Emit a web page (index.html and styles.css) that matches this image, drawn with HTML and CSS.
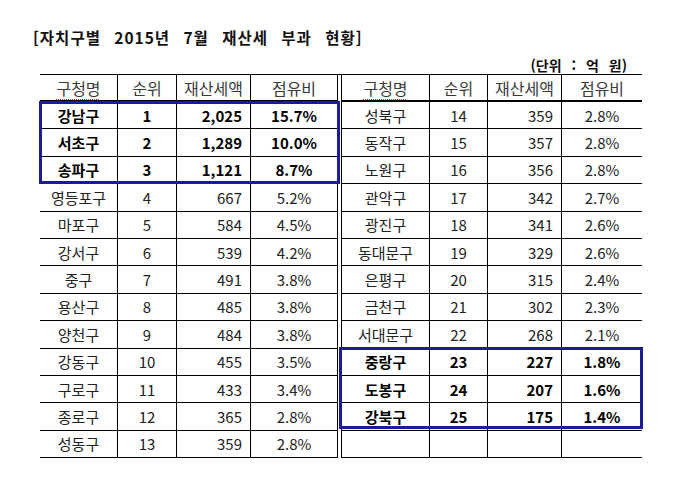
FILE: index.html
```html
<!DOCTYPE html>
<html lang="ko">
<head>
<meta charset="utf-8">
<link rel="stylesheet" href="styles.css">
</head>
<body>
<div class="title">[자치구별 2015년 7월 재산세 부과 현황]</div>
<div class="unit">(단위 : 억 원)</div>
<div class="grid">
  <div class="c h"><span class="spell">구청명</span></div><div class="c h">순위</div><div class="c h">재산세액</div><div class="c h">점유비</div><div class="sp"></div><div class="c h"><span class="spell">구청명</span></div><div class="c h">순위</div><div class="c h">재산세액</div><div class="c h">점유비</div>

  <div class="c b">강남구</div><div class="c b">1</div><div class="c b r">2,025</div><div class="c b">15.7%</div><div class="sp"></div><div class="c">성북구</div><div class="c">14</div><div class="c r">359</div><div class="c">2.8%</div>
  <div class="c b">서초구</div><div class="c b">2</div><div class="c b r">1,289</div><div class="c b">10.0%</div><div class="sp"></div><div class="c">동작구</div><div class="c">15</div><div class="c r">357</div><div class="c">2.8%</div>
  <div class="c b">송파구</div><div class="c b">3</div><div class="c b r">1,121</div><div class="c b">8.7%</div><div class="sp"></div><div class="c">노원구</div><div class="c">16</div><div class="c r">356</div><div class="c">2.8%</div>
  <div class="c">영등포구</div><div class="c">4</div><div class="c r">667</div><div class="c">5.2%</div><div class="sp"></div><div class="c">관악구</div><div class="c">17</div><div class="c r">342</div><div class="c">2.7%</div>
  <div class="c">마포구</div><div class="c">5</div><div class="c r">584</div><div class="c">4.5%</div><div class="sp"></div><div class="c">광진구</div><div class="c">18</div><div class="c r">341</div><div class="c">2.6%</div>
  <div class="c">강서구</div><div class="c">6</div><div class="c r">539</div><div class="c">4.2%</div><div class="sp"></div><div class="c">동대문구</div><div class="c">19</div><div class="c r">329</div><div class="c">2.6%</div>
  <div class="c">중구</div><div class="c">7</div><div class="c r">491</div><div class="c">3.8%</div><div class="sp"></div><div class="c">은평구</div><div class="c">20</div><div class="c r">315</div><div class="c">2.4%</div>
  <div class="c">용산구</div><div class="c">8</div><div class="c r">485</div><div class="c">3.8%</div><div class="sp"></div><div class="c">금천구</div><div class="c">21</div><div class="c r">302</div><div class="c">2.3%</div>
  <div class="c">양천구</div><div class="c">9</div><div class="c r">484</div><div class="c">3.8%</div><div class="sp"></div><div class="c">서대문구</div><div class="c">22</div><div class="c r">268</div><div class="c">2.1%</div>
  <div class="c">강동구</div><div class="c">10</div><div class="c r">455</div><div class="c">3.5%</div><div class="sp"></div><div class="c b">중랑구</div><div class="c b">23</div><div class="c b r">227</div><div class="c b">1.8%</div>
  <div class="c">구로구</div><div class="c">11</div><div class="c r">433</div><div class="c">3.4%</div><div class="sp"></div><div class="c b">도봉구</div><div class="c b">24</div><div class="c b r">207</div><div class="c b">1.6%</div>
  <div class="c">종로구</div><div class="c">12</div><div class="c r">365</div><div class="c">2.8%</div><div class="sp"></div><div class="c b">강북구</div><div class="c b">25</div><div class="c b r">175</div><div class="c b">1.4%</div>
  <div class="c">성동구</div><div class="c">13</div><div class="c r">359</div><div class="c">2.8%</div><div class="sp"></div><div class="c"></div><div class="c"></div><div class="c r"></div><div class="c"></div>

  <div class="hl hl-left"></div>
  <div class="hl hl-right"></div>
</div>
</body>
</html>
```

FILE: styles.css
```css
html, body {
  margin: 0;
  padding: 0;
  background: #ffffff;
}

body {
  width: 680px;
  height: 485px;
  overflow: hidden;
  font-family: "Noto Sans CJK KR", "Noto Sans", sans-serif;
  color: #222222;
}

.title {
  padding: 27px 0 0 33px;
  height: 20px;
  line-height: 20px;
  font-size: 15.5px;
  font-weight: bold;
  color: #111111;
  letter-spacing: 1px;
  word-spacing: 8px;
  white-space: nowrap;
}

.unit {
  margin-top: 9px;
  height: 18px;
  line-height: 18px;
  padding-right: 53px;
  text-align: right;
  font-size: 14px;
  font-weight: bold;
  color: #111111;
  word-spacing: 6px;
}

.grid {
  position: relative;
  margin: 0 0 0 40px;
  width: 602px;
  border-top: 1px solid #000000;
  display: grid;
  grid-template-columns: 78px 59px 74px 87px 4px 88px 58px 74px 80px;
  grid-template-rows: 27px repeat(13, 27.4px);
}

.c {
  box-sizing: border-box;
  border-right: 1px solid #000000;
  border-bottom: 1px solid #000000;
  display: flex;
  align-items: center;
  justify-content: center;
  font-size: 15px;
  line-height: 1;
  white-space: nowrap;
}

.grid > :nth-child(9n) {
  border-right: none;
}

.sp {
  box-sizing: border-box;
  border-right: 1px solid #000000;
}

.h {
  border-bottom: 2px solid #000000;
  color: #3a3a3a;
  font-size: 16px;
  padding-top: 1px;
}

.spell {
  text-decoration: underline dotted #d02020;
  text-decoration-thickness: 1px;
  text-underline-offset: 4px;
}

.r {
  justify-content: flex-end;
  padding-right: 8px;
}

.b {
  font-weight: bold;
  color: #000000;
}

.hl {
  position: absolute;
  box-sizing: border-box;
  border: 3px solid #1c1c92;
  pointer-events: none;
}

.hl-left {
  left: -1px;
  top: 26px;
  width: 301px;
  height: 83px;
}

.hl-right {
  left: 299px;
  top: 272px;
  width: 304px;
  height: 82px;
}
```
